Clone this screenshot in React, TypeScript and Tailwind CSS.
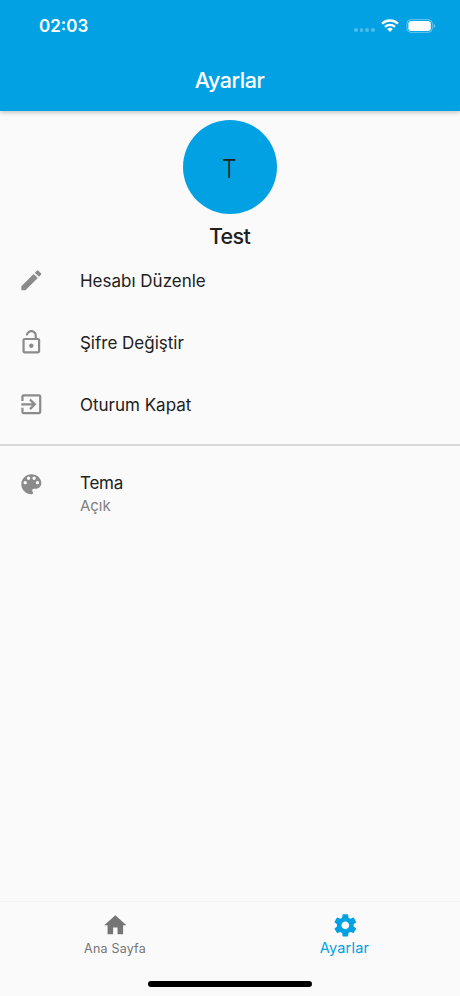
import type { ReactNode } from "react";

function Icon({ d, className = "" }: { d: string; className?: string }) {
  return (
    <svg viewBox="0 0 24 24" className={`size-[26.67px] shrink-0 ${className}`} fill="currentColor">
      <path d={d} />
    </svg>
  );
}

const icons = {
  edit: "M3 17.25V21h3.75L17.81 9.94l-3.75-3.75L3 17.25zM20.71 7.04c.39-.39.39-1.02 0-1.41l-2.34-2.34a.9959.9959 0 0 0-1.41 0l-1.83 1.83 3.75 3.75 1.83-1.83z",
  lock: "M12 17c1.1 0 2-.9 2-2s-.9-2-2-2-2 .9-2 2 .9 2 2 2zm6-9h-1V6c0-2.76-2.24-5-5-5-2.28 0-4.27 1.54-4.84 3.75-.14.54.18 1.08.72 1.22.53.14 1.08-.18 1.22-.72C9.44 3.93 10.63 3 12 3c1.65 0 3 1.35 3 3v2H6c-1.1 0-2 .9-2 2v10c0 1.1.9 2 2 2h12c1.1 0 2-.9 2-2V10c0-1.1-.9-2-2-2zm0 12H6V10h12v10z",
  exit: "M10.09 15.59L11.5 17l5-5-5-5-1.41 1.41L12.67 11H3v2h9.67l-2.58 2.59zM19 3H5c-1.11 0-2 .9-2 2v4h2V5h14v14H5v-4H3v4c0 1.1.89 2 2 2h14c1.1 0 2-.9 2-2V5c0-1.1-.9-2-2-2z",
  palette: "M12 3c-4.97 0-9 4.03-9 9s4.03 9 9 9c.83 0 1.5-.67 1.5-1.5 0-.39-.15-.74-.39-1.01-.23-.26-.38-.61-.38-.99 0-.83.67-1.5 1.5-1.5H16c2.76 0 5-2.24 5-5 0-4.42-4.03-8-9-8zm-5.5 9c-.83 0-1.5-.67-1.5-1.5S5.67 9 6.5 9 8 9.67 8 10.5 7.33 12 6.5 12zm3-4C8.67 8 8 7.33 8 6.5S8.67 5 9.5 5s1.5.67 1.5 1.5S10.33 8 9.5 8zm5 0c-.83 0-1.5-.67-1.5-1.5S13.67 5 14.5 5s1.5.67 1.5 1.5S15.33 8 14.5 8zm3 4c-.83 0-1.5-.67-1.5-1.5S16.67 9 17.5 9s1.5.67 1.5 1.5-.67 1.5-1.5 1.5z",
  home: "M10 20v-6h4v6h5v-8h3L12 3 2 12h3v8z",
  settings: "M19.43 12.98c.04-.32.07-.64.07-.98s-.03-.66-.07-.98l2.11-1.65c.19-.15.24-.42.12-.64l-2-3.46c-.12-.22-.39-.3-.61-.22l-2.49 1c-.52-.4-1.08-.73-1.69-.98l-.38-2.65C14.46 2.18 14.25 2 14 2h-4c-.25 0-.46.18-.49.42l-.38 2.65c-.61.25-1.17.59-1.69.98l-2.49-1c-.23-.09-.49 0-.61.22l-2 3.46c-.13.22-.07.49.12.64l2.11 1.65c-.04.32-.07.65-.07.98s.03.66.07.98l-2.11 1.65c-.19.15-.24.42-.12.64l2 3.46c.12.22.39.3.61.22l2.49-1c.52.4 1.08.73 1.69.98l.38 2.65c.03.24.24.42.49.42h4c.25 0 .46-.18.49-.42l.38-2.65c.61-.25 1.17-.59 1.69-.98l2.49 1c.23.09.49 0 .61-.22l2-3.46c.12-.22.07-.49-.12-.64l-2.11-1.65zM12 15.5c-1.93 0-3.5-1.57-3.5-3.5s1.57-3.5 3.5-3.5 3.5 1.57 3.5 3.5-1.57 3.5-3.5 3.5z",
};

function Row({ icon, children }: { icon: string; children: ReactNode }) {
  return (
    <li className="flex h-[62.2px] items-center pl-[17.8px]">
      <Icon d={icon} className="text-[#8b8b8b]" />
      <span className="ml-[35.5px] pt-[2px] text-[17px] leading-6 font-[370]">{children}</span>
    </li>
  );
}

function StatusBar() {
  return (
    <div className="flex h-[51px] items-center justify-between pr-[24px] pl-[39px]">
      <span className="pt-[2px] text-[17px] font-semibold">02:03</span>
      <div className="flex items-center">
        <div className="mt-[9px] mr-[6.5px] flex gap-[2px]">
          {[0, 1, 2, 3].map((dot) => (
            <i key={dot} className="size-[3.6px] rounded-full bg-white/30" />
          ))}
        </div>
        <svg className="mr-[7px] h-[13px] w-[18px]" viewBox="0 0 18 13" fill="none" stroke="white" strokeWidth="2.4">
          <path d="M1 4.6a11.7 11.7 0 0 1 16 0M4 7.8a7.5 7.5 0 0 1 10 0" />
          <path d="M9 13 6.2 10.1a4.2 4.2 0 0 1 5.6 0Z" fill="white" stroke="none" />
        </svg>
        <svg className="h-[14px] w-[30px]" viewBox="0 0 30 14">
          <rect x=".9" y=".6" width="25.4" height="12.8" rx="4" fill="none" stroke="white" strokeOpacity=".4" />
          <rect x="2.4" y="2.1" width="22.4" height="9.8" rx="2.7" fill="white" />
          <path d="M27.7 4.8c2 .7 2 3.7 0 4.4Z" fill="white" fillOpacity=".4" />
        </svg>
      </div>
    </div>
  );
}

export default function App() {
  return (
    <div className="flex h-[996px] w-[460px] flex-col overflow-hidden bg-[#fafafa] font-['Inter','Liberation_Sans',sans-serif] text-[#212121]">
      <header className="h-[111px] shrink-0 bg-[#02a1e4] text-white shadow-[0_2px_4px_rgba(0,0,0,0.2)]">
        <StatusBar />
        <h1 className="pt-[15px] pr-px text-center text-[21.5px] leading-[28px] font-medium tracking-[-0.45px]">Ayarlar</h1>
      </header>
      <main className="flex flex-1 flex-col">
        <section className="flex flex-col items-center pt-[9px]">
          <div className="flex size-[94px] items-center justify-center rounded-full bg-[#02a1e4] pt-[2px] pr-px text-[26px] font-[350]">
            <span className="scale-x-90">T</span>
          </div>
          <h2 className="mt-[8px] pr-px text-[21.5px] leading-[28px] font-[450] tracking-[-0.7px]">Test</h2>
        </section>
        <ul className="mt-[-1px]">
          <Row icon={icons.edit}>Hesabı Düzenle</Row>
          <Row icon={icons.lock}>Şifre Değiştir</Row>
          <Row icon={icons.exit}>Oturum Kapat</Row>
        </ul>
        <hr className="mt-[8px] border-t-2 border-[#d9d9d9]" />
        <section className="flex items-start pt-[25.4px] pl-[17.8px]">
          <Icon d={icons.palette} className="text-[#8b8b8b]" />
          <div className="ml-[35.5px] flex flex-col">
            <span className="text-[17px] leading-[24px] font-[370] tracking-[-0.2px]">Tema</span>
            <span className="text-[15px] leading-[22px] font-[370] text-[#808080]">Açık</span>
          </div>
        </section>
      </main>
      <nav className="grid h-[95px] grid-cols-2 border-t border-[#f3f3f3]">
        <div className="flex flex-col items-center pt-[10px] text-[#757575]">
          <Icon d={icons.home} />
          <span className="text-[12.5px] leading-[20px] tracking-[0.2px]">Ana Sayfa</span>
        </div>
        <div className="flex flex-col items-center pt-[10px] text-[#02a1e4]">
          <Icon d={icons.settings} />
          <span className="-mt-px pr-px text-[14.5px] leading-[20px] tracking-[0.2px]">Ayarlar</span>
        </div>
      </nav>
      <div className="absolute top-[981px] left-[148px] h-[5.5px] w-[164px] rounded-full bg-black" />
    </div>
  );
}
